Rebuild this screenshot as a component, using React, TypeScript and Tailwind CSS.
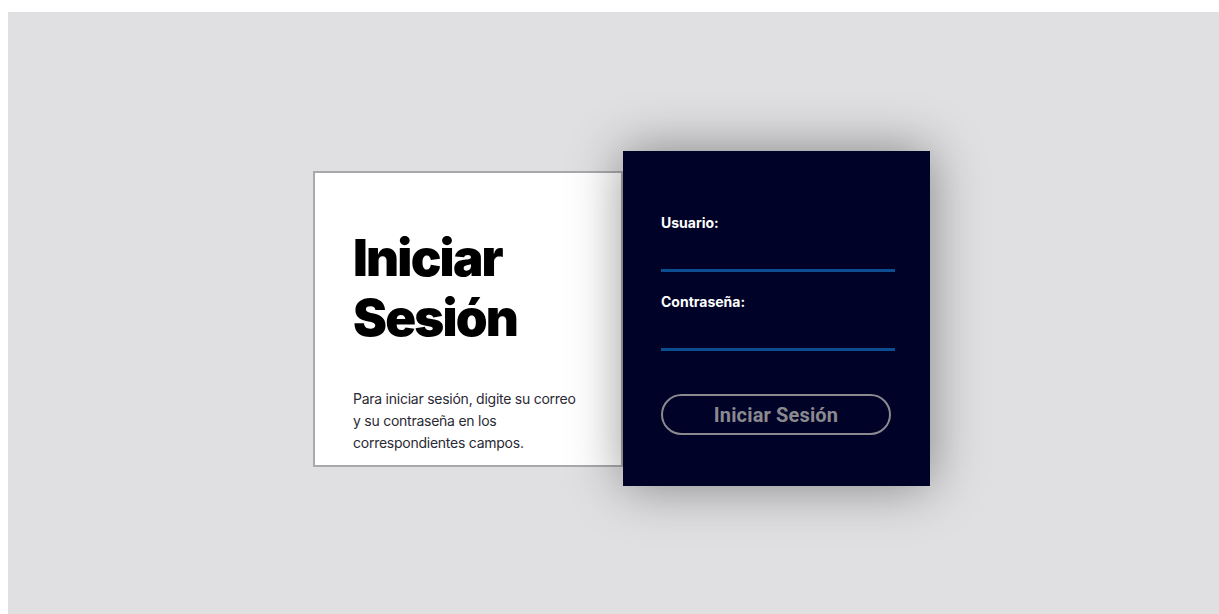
export default function App() {
  return (
    <div className="bg-white min-h-[614px] pt-[12px] pl-[8px]">
      <div className="bg-[#e0e0e2] h-[602px] flex items-center justify-center pl-4 pt-[11px] font-['Inter',sans-serif]">
        {/* left intro card */}
        <div className="w-[310px] h-[296px] bg-white border-2 border-[#a9a9ab] pt-[55px] px-[38px]">
          <h1 className="text-[51px] leading-[60px] font-black text-black tracking-[-1.8px]">
            Iniciar
            <br />
            Sesión
          </h1>
          <p className="mt-[40px] text-[14px] leading-[22px] text-[#2a2a35] tracking-[-0.25px] max-w-[232px]">
            Para iniciar sesión, digite su correo y su contraseña en los correspondientes campos.
          </p>
        </div>

        {/* login form panel */}
        <div className="relative z-10 w-[307px] h-[335px] bg-[#000228] shadow-[0_0_50px_rgba(0,0,0,0.42)] pt-[62px] pl-[38px]">
          <form className="w-[234px] flex flex-col" onSubmit={(e) => e.preventDefault()}>
            <label className="text-white text-[14px] leading-[20px] font-bold">Usuario:</label>
            <input
              type="text"
              className="h-[39px] bg-transparent border-b-[3px] border-[#0b4d90] outline-none text-white text-sm"
            />
            <label className="mt-[20px] text-white text-[14px] leading-[20px] font-bold">Contraseña:</label>
            <input
              type="password"
              className="h-[39px] bg-transparent border-b-[3px] border-[#0b4d90] outline-none text-white text-sm"
            />
            <button
              type="submit"
              className="mt-[43px] w-[230px] h-[41px] rounded-full border-2 border-[#8a8a8e] text-[#8a8a8e] text-[20px] font-bold font-['Roboto',sans-serif] tracking-[0.15px]"
            >
              Iniciar Sesión
            </button>
          </form>
        </div>
      </div>
    </div>
  );
}
